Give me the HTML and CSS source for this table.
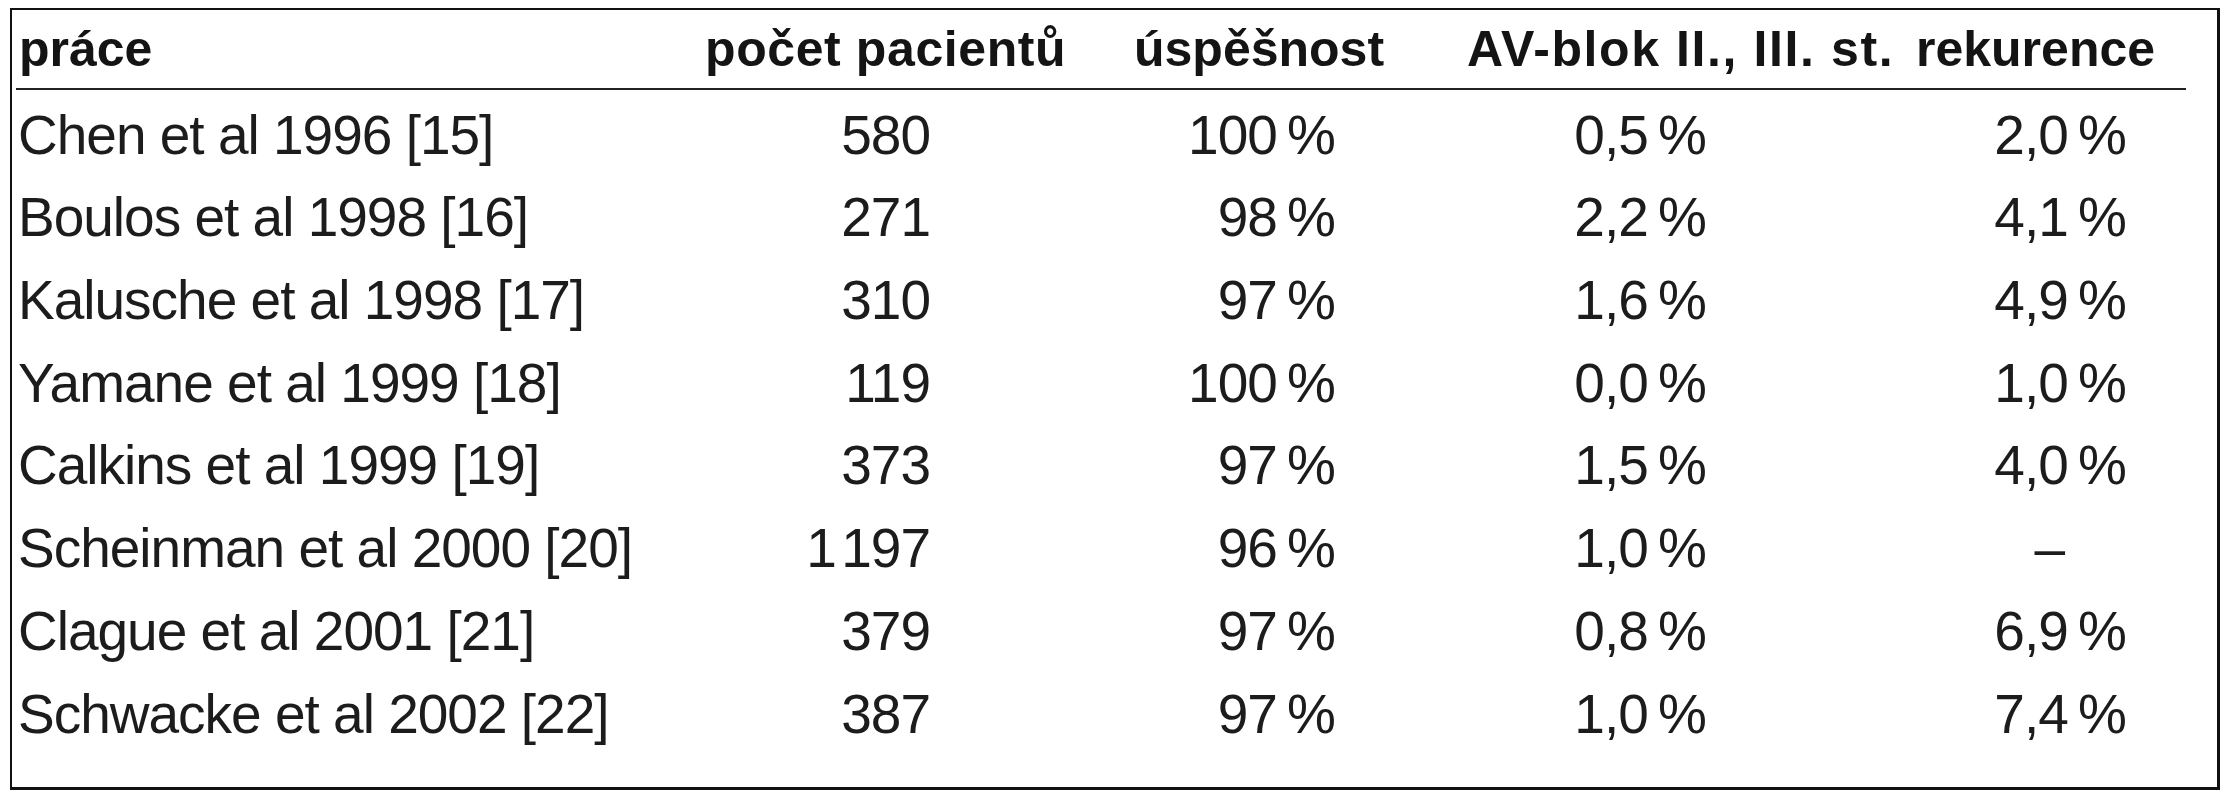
FILE: index.html
```html
<!DOCTYPE html>
<html lang="cs">
<head>
<meta charset="utf-8">
<title>Tabulka</title>
<link rel="stylesheet" href="styles.css">
</head>
<body>
<div class="frame">
  <div class="table">
    <div class="row head">
      <div class="c c1">práce</div>
      <div class="c c2">počet pacientů</div>
      <div class="c c3">úspěšnost</div>
      <div class="c c4">AV-blok II., III. st.</div>
      <div class="c c5">rekurence</div>
    </div>
    <div class="body">
      <div class="row"><div class="c c1">Chen et al 1996 [15]</div><div class="c c2">580</div><div class="c c3">100 %</div><div class="c c4">0,5 %</div><div class="c c5">2,0 %</div></div>
      <div class="row"><div class="c c1">Boulos et al 1998 [16]</div><div class="c c2">271</div><div class="c c3">98 %</div><div class="c c4">2,2 %</div><div class="c c5">4,1 %</div></div>
      <div class="row"><div class="c c1">Kalusche et al 1998 [17]</div><div class="c c2">310</div><div class="c c3">97 %</div><div class="c c4">1,6 %</div><div class="c c5">4,9 %</div></div>
      <div class="row"><div class="c c1">Yamane et al 1999 [18]</div><div class="c c2">119</div><div class="c c3">100 %</div><div class="c c4">0,0 %</div><div class="c c5">1,0 %</div></div>
      <div class="row"><div class="c c1">Calkins et al 1999 [19]</div><div class="c c2">373</div><div class="c c3">97 %</div><div class="c c4">1,5 %</div><div class="c c5">4,0 %</div></div>
      <div class="row"><div class="c c1">Scheinman et al 2000 [20]</div><div class="c c2">1 197</div><div class="c c3">96 %</div><div class="c c4">1,0 %</div><div class="c c5 dash">–</div></div>
      <div class="row"><div class="c c1">Clague et al 2001 [21]</div><div class="c c2">379</div><div class="c c3">97 %</div><div class="c c4">0,8 %</div><div class="c c5">6,9 %</div></div>
      <div class="row"><div class="c c1">Schwacke et al 2002 [22]</div><div class="c c2">387</div><div class="c c3">97 %</div><div class="c c4">1,0 %</div><div class="c c5">7,4 %</div></div>
    </div>
  </div>
</div>
</body>
</html>
```
FILE: styles.css
```css
html, body {
  margin: 0;
  padding: 0;
  background: #ffffff;
}

.frame {
  margin: 8px 0 0 10px;
  width: 2210px;
  height: 782px;
  box-sizing: border-box;
  border: 2px solid #111111;
  border-right-width: 3px;
  border-bottom-width: 3px;
  padding: 0 0 0 4px;
  color: #1c1c1c;
  font-family: "Liberation Sans", Arial, sans-serif;
}

.table {
  width: 2170px;
}

.row {
  display: grid;
  grid-template-columns: 684px 400px 320px 485px 281px;
  white-space: nowrap;
}

.head {
  font-weight: bold;
  font-size: 50px;
  line-height: 60px;
  padding-top: 8.7px;
  padding-bottom: 9.3px;
  border-bottom: 2px solid #222222;
  color: #141414;
}

.head .c1 { padding-left: 3px; }
.head .c2 { padding-left: 5px; letter-spacing: 0.6px; }
.head .c3 { padding-left: 34px; }
.head .c4 { padding-left: 47px; letter-spacing: 1.6px; }
.head .c5 { padding-left: 11px; }

.body {
  padding-top: 3.6px;
  font-size: 55px;
  line-height: 82.7px;
  letter-spacing: -1px;
}

.body .c1 { padding-left: 2px; }
.body .c2, .body .c3, .body .c4, .body .c5 {
  text-align: right;
  word-spacing: -4px;
}
.body .c2 { padding-right: 170px; word-spacing: -9px; }
.body .c3 { padding-right: 85px; }
.body .c4 { padding-right: 199px; }
.body .c5 { padding-right: 60px; }
.body .c5.dash { padding-right: 122px; }
```
